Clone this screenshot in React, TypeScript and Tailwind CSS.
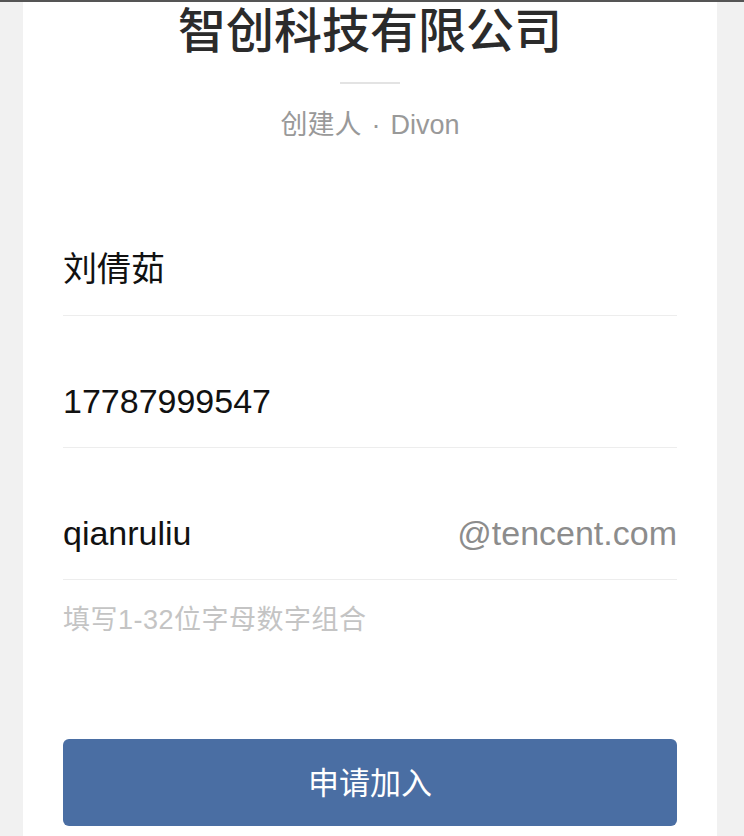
import React from 'react';

const font = { fontFamily: '"Liberation Sans", "Noto Sans CJK SC", sans-serif' };

function FieldRow({ value, suffix }: { value: string; suffix?: string }) {
  return (
    <div className="flex h-[132px] items-end justify-between border-b border-[#ededed] pb-[22px]">
      <span className="text-[34px] leading-[48px] text-[#111]">{value}</span>
      {suffix && <span className="text-[34px] leading-[48px] text-[#8c8c8c]">{suffix}</span>}
    </div>
  );
}

export default function App() {
  return (
    <div className="min-h-[836px] bg-[#f1f1f1] border-t-2 border-[#555]" style={font}>
      <div className="ml-[23px] mr-[27px] min-h-[834px] bg-white px-[40px]">
        {/* Header */}
        <div className="flex flex-col items-center">
          <h1 className="mt-0 text-[48px] font-medium leading-[60px] text-[#2b2b2b]">智创科技有限公司</h1>
          <div className="mt-[20px] h-[2px] w-[60px] bg-[#e3e3e3]"></div>
          <p className="mt-[23px] text-[27px] leading-[36px] text-[#999]">
            创建人<span className="mx-[10px]">·</span>Divon
          </p>
        </div>

        {/* Form */}
        <div className="mt-[41px]">
          <FieldRow value="刘倩茹" />
          <FieldRow value="17787999547" />
          <FieldRow value="qianruliu" suffix="@tencent.com" />
          <p className="mt-[22px] text-[27px] leading-[36px] tracking-[0.5px] text-[#c4c4c4]">填写1-32位字母数字组合</p>
        </div>

        <button className="mt-[101px] flex h-[87px] w-full items-center justify-center rounded-[6px] bg-[#4a6ea3] pt-[3px] text-[31px] text-white">
          申请加入
        </button>
      </div>
    </div>
  );
}
